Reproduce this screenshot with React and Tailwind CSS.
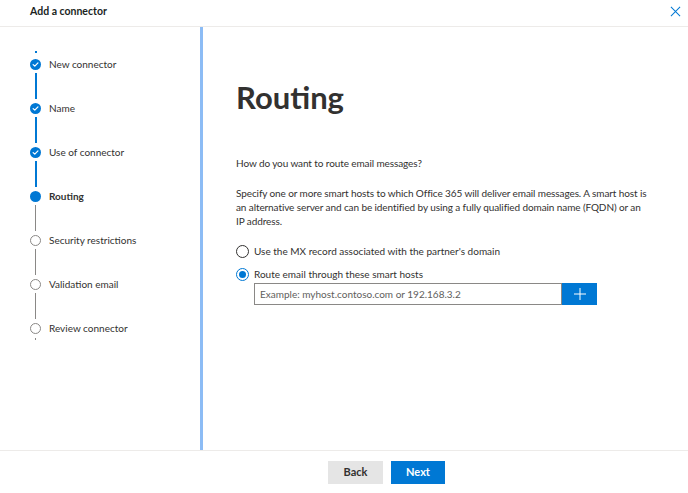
import React from 'react';

const steps = [
  { label: 'New connector', state: 'done' },
  { label: 'Name', state: 'done' },
  { label: 'Use of connector', state: 'done' },
  { label: 'Routing', state: 'current' },
  { label: 'Security restrictions', state: 'todo' },
  { label: 'Validation email', state: 'todo' },
  { label: 'Review connector', state: 'todo' },
];

const StepDot = ({ state }) => {
  if (state === 'done') {
    return (
      <div className="w-[11px] h-[11px] rounded-full bg-[#0078d4] flex items-center justify-center shrink-0">
        <svg width="7" height="7" viewBox="0 0 8 8" fill="none">
          <path d="M1.3 4.1 3.2 5.9 6.8 2.2" stroke="white" strokeWidth="1.4" strokeLinecap="round" strokeLinejoin="round" />
        </svg>
      </div>
    );
  }
  if (state === 'current') {
    return <div className="w-[11px] h-[11px] rounded-full bg-[#0078d4] shrink-0" />;
  }
  return <div className="w-[11px] h-[11px] rounded-full border border-[#8a8886] bg-white shrink-0" />;
};

const Stepper = () => (
  <div className="pt-[24px] pl-[30px]">
    <div className="w-[11px] flex justify-center">
      <div className="w-[2px] h-[2px] bg-[#0078d4] mb-[4px]" />
    </div>
    {steps.map((s, i) => {
      const last = i === steps.length - 1;
      const lineDone = i < 3;
      return (
        <div key={s.label}>
          <div className="flex items-center h-[14px]">
            <StepDot state={s.state} />
            <span
              className={
                'ml-[8px] text-[10px] text-[#323130] whitespace-nowrap ' +
                (s.state === 'current' ? 'font-bold' : '')
              }
            >
              {s.label}
            </span>
          </div>
          {!last && (
            <div className="w-[11px] flex justify-center">
              <div
                className={
                  'my-[2px] h-[26px] ' +
                  (lineDone ? 'w-[2px] bg-[#0078d4]' : 'w-px bg-[#8a8886]')
                }
              />
            </div>
          )}
          {last && (
            <div className="w-[11px] flex justify-center">
              <div className="w-px h-[2px] bg-[#8a8886] mt-[3px]" />
            </div>
          )}
        </div>
      );
    })}
  </div>
);

const Radio = ({ checked, label }) => (
  <label className="flex items-center gap-[5px] h-[14px]">
    {checked ? (
      <span className="w-[13px] h-[13px] rounded-full border border-[#0078d4] flex items-center justify-center">
        <span className="w-[7px] h-[7px] rounded-full bg-[#0078d4]" />
      </span>
    ) : (
      <span className="w-[13px] h-[13px] rounded-full border border-[#323130]" />
    )}
    <span className="text-[10px] text-[#323130]">{label}</span>
  </label>
);

export default function App() {
  return (
    <div
      className="w-[688px] h-[493px] bg-white flex flex-col overflow-hidden"
      style={{ fontFamily: 'Lato, "Open Sans", sans-serif' }}
    >
      {/* Header */}
      <div className="h-[27px] flex items-start justify-between pl-[30px] pr-[7px] pt-[4px] border-b border-[#edebe9] shrink-0">
        <h1 className="text-[10.5px] leading-[14px] font-bold text-[#201f1e]">Add a connector</h1>
        <svg width="11" height="11" viewBox="0 0 12 12" className="mt-[2px]">
          <path d="M1 1 11 11 M11 1 1 11" stroke="#0078d4" strokeWidth="1.1" />
        </svg>
      </div>

      <div className="flex flex-1 min-h-0">
        {/* Sidebar */}
        <div className="w-[203px] shrink-0 border-r-[3px] border-[#8cbcf5]">
          <Stepper />
        </div>

        {/* Main */}
        <div className="flex-1 pl-[33px] pr-[40px]">
          <h2 className="mt-[50px] text-[31px] leading-[40px] font-bold text-[#323130]">Routing</h2>
          <div className="text-[10px] leading-[14px] tracking-[-0.1px] text-[#323130]">
            <p className="mt-[39px]">How do you want to route email messages?</p>
            <p className="mt-[16px]">
              Specify one or more smart hosts to which Office 365 will deliver email messages. A smart host is
              an alternative server and can be identified by using a fully qualified domain name (FQDN) or an
              IP address.
            </p>
          </div>
          <div className="mt-[16px] flex flex-col gap-[9px]">
            <Radio label="Use the MX record associated with the partner's domain" />
            <Radio checked label="Route email through these smart hosts" />
          </div>
          <div className="mt-[2px] ml-[18px] flex h-[22px]">
            <div className="w-[308px] border border-[#8a8886] flex items-center px-[5px]">
              <span className="text-[10px] text-[#605e5c]">Example: myhost.contoso.com or 192.168.3.2</span>
            </div>
            <button className="w-[35px] bg-[#0078d4] flex items-center justify-center">
              <svg width="12" height="12" viewBox="0 0 12 12">
                <path d="M6 0V12M0 6H12" stroke="white" strokeWidth="1" />
              </svg>
            </button>
          </div>
        </div>
      </div>

      {/* Footer */}
      <div className="h-[43px] border-t border-[#edebe9] flex items-center pl-[328px] gap-[8px] shrink-0">
        <button className="w-[55px] h-[23px] bg-[#e5e5e5] text-[11px] font-bold text-[#323130]">Back</button>
        <button className="w-[54px] h-[23px] bg-[#0078d4] text-[11px] font-bold text-white">Next</button>
      </div>
    </div>
  );
}
